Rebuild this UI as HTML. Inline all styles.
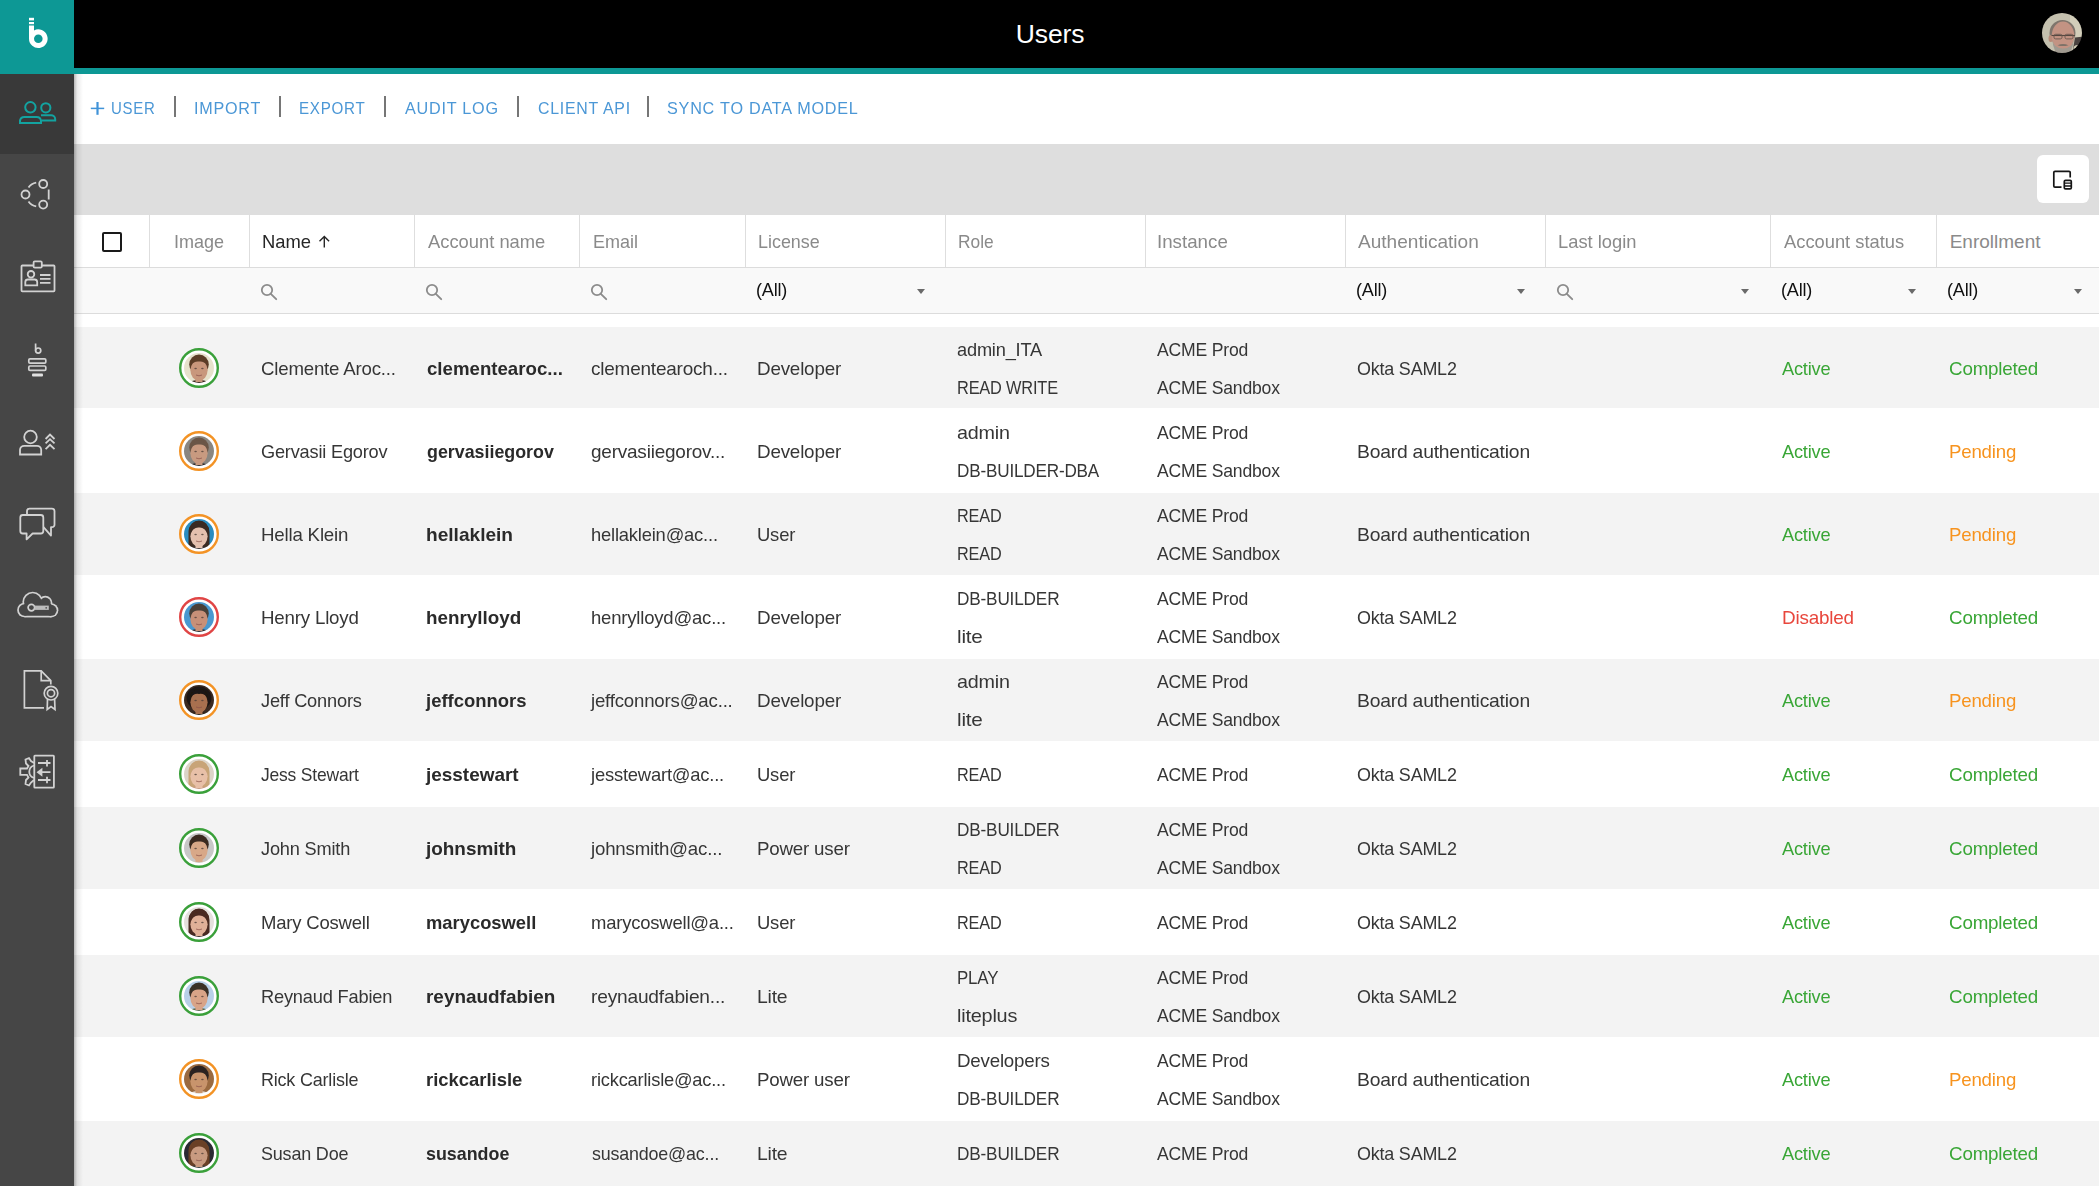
<!DOCTYPE html>
<html><head><meta charset="utf-8"><title>Users</title>
<style>
*{box-sizing:border-box}
html,body{margin:0;padding:0}
body{width:2099px;height:1186px;overflow:hidden;position:relative;background:#fff;font-family:"Liberation Sans",sans-serif;color:#262626}
.abs{position:absolute}
#topbar{position:absolute;left:0;top:0;width:2099px;height:68px;background:#000}
#teal{position:absolute;left:0;top:68px;width:2099px;height:6px;background:#0d9895}
#logo{position:absolute;left:0;top:0;width:74px;height:74px;background:#0d9895}
#side{position:absolute;left:0;top:74px;width:74px;height:1112px;background:#464646}
#sideact{position:absolute;left:0;top:74px;width:74px;height:80px;background:#393939}
#shadow{position:absolute;left:74px;top:74px;width:9px;height:1112px;background:linear-gradient(to right,rgba(0,0,0,.28),rgba(0,0,0,.08) 35%,rgba(0,0,0,0));z-index:5}
#title{position:absolute;left:0;width:2099px;top:17px;text-align:center;color:#fff;font-size:26.5px;line-height:34px;letter-spacing:-0.1px;padding-left:2px}
#band{position:absolute;left:74px;top:144px;width:2025px;height:71px;background:#dedede}
#expbtn{position:absolute;left:2037px;top:155px;width:52px;height:48px;background:#fff;border-radius:6px}
.tb{position:absolute;top:96px;line-height:25px;font-size:17px;color:#4b97d6;letter-spacing:0.8px;white-space:nowrap;transform-origin:0 50%}
.sep{position:absolute;top:96px;width:1.6px;height:21px;background:#767676}
#hdr{position:absolute;left:74px;top:215px;width:2025px;height:53px;background:#fff;border-bottom:1px solid #dcdcdc}
.vs{position:absolute;top:215px;width:1px;height:52px;background:#dedede}
#filt{position:absolute;left:74px;top:268px;width:2025px;height:46px;background:#f9f9f9;border-bottom:1px solid #dcdcdc}
.h{position:absolute;line-height:24px;font-size:19px;color:#8a8a8a;white-space:nowrap;letter-spacing:0;transform-origin:0 50%}
.t{position:absolute;line-height:24px;font-size:19px;color:#363636;white-space:nowrap;letter-spacing:-0.2px;transform-origin:0 50%}
.t.b{font-weight:bold;letter-spacing:0;color:#2a2a2a}
.grn{color:#39a636}
.org{color:#f7931e}
.red{color:#e8463c}
.row{position:absolute;left:74px;width:2025px}
.av{position:absolute}
.all{position:absolute;top:278px;line-height:24px;font-size:18px;color:#111;letter-spacing:-0.2px;transform-origin:0 50%}
.tri{position:absolute;top:289px;width:0;height:0;border-left:4.5px solid transparent;border-right:4.5px solid transparent;border-top:5px solid #6a6a6a}
.srch{position:absolute;top:282px}
</style></head><body>
<div id="topbar"></div>
<div id="teal"></div>
<div id="logo">
<svg width="74" height="74" viewBox="0 0 74 74" style="position:absolute;left:0;top:0">
<rect x="29" y="17.8" width="5" height="2.6" fill="#fff"/>
<rect x="29" y="22" width="5" height="2.2" fill="#fff"/>
<path d="M29 25.4 H34 V30.45 A9.3 9.3 0 1 1 29 38.7 Z" fill="#fff"/>
<circle cx="38.3" cy="38.7" r="4.3" fill="#0d9895"/>
</svg>
</div>
<div id="side"></div>
<div id="sideact"></div>
<svg class="abs" style="left:0;top:74px" width="74" height="780" viewBox="0 74 74 780" fill="none">
<!-- users (active) -->
<g stroke="#13a3a0" stroke-width="2">
<circle cx="30.4" cy="107.3" r="5.2"/>
<path d="M20 123 V120.5 A4.5 4.5 0 0 1 24.5 116.9 H36.5 A4.5 4.5 0 0 1 41 120.5 V123 Z"/>
<circle cx="45.8" cy="107.8" r="4.6"/>
<path d="M41 115.3 H51 A4 4 0 0 1 55.2 119 V120.4 H41.8"/>
</g>
<!-- share -->
<g stroke="#d2d2d2" stroke-width="1.8">
<path d="M28.5 187.5 A12 12 0 0 1 36.2 182.6"/>
<path d="M28.5 201.5 A12 12 0 0 0 36.2 206.4"/>
<path d="M48.7 189.5 V199.5"/>
<circle cx="25.5" cy="194.5" r="4"/>
<circle cx="43.2" cy="184" r="4"/>
<circle cx="43.2" cy="204.6" r="4"/>
</g>
<!-- id card -->
<g stroke="#d2d2d2" stroke-width="1.8">
<rect x="21.5" y="265.5" width="33" height="25.8" rx="0.8"/>
<rect x="33.6" y="261.3" width="8.2" height="6.3" rx="1.2" fill="#464646"/>
<circle cx="31" cy="274.3" r="3.3"/>
<path d="M25.3 285.4 V282 A2.6 2.6 0 0 1 27.9 279.5 H34.6 A2.6 2.6 0 0 1 37.2 282 V285.4 Z"/>
<path d="M40 275 H50.5 M40 278.8 H50.5 M40 282.8 H50.5"/>
</g>
<!-- board -->
<g stroke="#d2d2d2" stroke-width="1.7">
<path d="M35.6 343.5 V350.5"/>
<circle cx="38.2" cy="350.6" r="2.6"/>
<rect x="28.8" y="358.8" width="17" height="4.4" rx="1.2"/>
<rect x="28.8" y="366" width="17" height="4.4" rx="1.2"/>
</g>
<rect x="32" y="373.6" width="11" height="3" rx="1" fill="#e0e0e0"/>
<!-- user promote -->
<g stroke="#d2d2d2" stroke-width="1.8">
<circle cx="30.5" cy="437" r="6.3"/>
<path d="M20 454.5 V449.8 A4.2 4.2 0 0 1 24.2 445.9 H37 A4.2 4.2 0 0 1 41.2 449.8 V454.5 Z"/>
<path d="M45.6 439 L50 434.6 L54.5 439 M45.6 443.4 L50 439.2 L54.5 443.4 M45.6 449.2 L50 444.8 L54.5 449.2"/>
</g>
<!-- chat -->
<g stroke="#d2d2d2" stroke-width="1.8" stroke-linejoin="round">
<path d="M27 514.8 V511 A2.5 2.5 0 0 1 29.5 508.6 H52 A2.5 2.5 0 0 1 54.5 511 V524.5 A2.5 2.5 0 0 1 52 527.2 H51 V535.6 L43.5 527.2"/>
<path d="M22.8 515 H40.8 A2.5 2.5 0 0 1 43.3 517.5 V531 A2.5 2.5 0 0 1 40.8 533.5 H32.6 L26.6 539.4 V533.5 H22.8 A2.5 2.5 0 0 1 20.3 531 V517.5 A2.5 2.5 0 0 1 22.8 515 Z"/>
</g>
<!-- cloud key -->
<g fill="#d2d2d2">
<circle cx="32.7" cy="602" r="10.35"/><circle cx="45.3" cy="603" r="7.15"/><circle cx="51.2" cy="610.3" r="7.15"/><circle cx="24.5" cy="610" r="7.35"/>
<rect x="24.5" y="604" width="26.7" height="13.45"/>
</g>
<g fill="#464646">
<circle cx="32.7" cy="602" r="8.65"/><circle cx="45.3" cy="603" r="5.45"/><circle cx="51.2" cy="610.3" r="5.45"/><circle cx="24.5" cy="610" r="5.65"/>
<rect x="24.5" y="604" width="26.7" height="11.75"/>
</g>
<circle cx="31.4" cy="607.6" r="3.3" stroke="#d2d2d2" stroke-width="1.7"/>
<rect x="34.6" y="605.6" width="14.2" height="4.3" fill="#bcbcbc"/>
<circle cx="46.2" cy="607.8" r="0.9" fill="#555"/>
<!-- doc award -->
<g stroke="#d2d2d2" stroke-width="1.7">
<path d="M44 707.9 H24.4 V670.8 H41.2 L50.8 680.6 V684.5"/>
<path d="M41.2 670.8 V680.6 H50.8"/>
<circle cx="51" cy="693.2" r="6.8"/>
<circle cx="51" cy="693.2" r="3.6"/>
<path d="M47.5 699 L47.2 709.5 L51 706.5 L55 709.5 L54.6 699"/>
</g>
<!-- gear sliders -->
<g stroke="#d2d2d2" stroke-width="1.8">
<rect x="34.3" y="755.6" width="19.6" height="32" rx="0.6"/>
<path d="M34 763 L31 761 L29 758 L25.5 759.5 L26 763.5 L28.5 766 L27 768.5 L20.3 768.5 V774.8 L27 774.8 L28.5 777.5 L26 780 L25.5 784 L29 785.5 L31 782.5 L34 780"/>
<path d="M34 765.5 A6.5 6.5 0 0 0 34 778"/>
<path d="M38 763 H50.5 M47 760 V766.5 M38 780 H50.5 M47 776.8 V783.2 M41.5 772.2 H50.5"/>
<path d="M38 772.2 L41.5 769.5 V775 Z" fill="#d2d2d2"/>
</g>
</svg>
<div id="shadow"></div>
<svg class="abs" style="left:2042px;top:13px" width="40" height="40" viewBox="0 0 40 40">
<clipPath id="hav"><circle cx="20" cy="20" r="20"/></clipPath>
<filter id="havf" x="-10%" y="-10%" width="120%" height="120%"><feGaussianBlur stdDeviation="0.5"/></filter>
<g clip-path="url(#hav)"><g filter="url(#havf)">
<rect x="-2" y="-2" width="44" height="44" fill="#c4c0ae"/>
<rect x="28" y="-2" width="14" height="28" fill="#d2ceba"/>
<path d="M33 24.5 L42 23.5 V42 H30 Z" fill="#4a433f"/>
<ellipse cx="35.5" cy="35.5" rx="4" ry="3.5" fill="#cfcab4"/>
<ellipse cx="19" cy="45" rx="17" ry="7" fill="#2a2624"/>
<ellipse cx="20.5" cy="20" rx="13" ry="13" fill="#7e746c"/>
<ellipse cx="8.8" cy="25.5" rx="2.3" ry="3.6" fill="#b88a78"/>
<ellipse cx="21" cy="23" rx="11.3" ry="14.5" fill="#c39383"/>
<path d="M10.5 27 Q11 41 21 43 Q31 41 31.5 27 Q30 35.5 21 35.5 Q12 35.5 10.5 27 Z" fill="#a09a90"/>
<path d="M15.5 32.2 Q21 30 26.5 32.2 Q21 34 15.5 32.2 Z" fill="#7e7268"/>
<path d="M9.5 22.5 H33" stroke="#54463f" stroke-width="1.1"/>
<rect x="12" y="21.3" width="8" height="4.6" rx="1.6" fill="none" stroke="#65564e" stroke-width="0.9"/>
<rect x="23" y="21.3" width="8" height="4.6" rx="1.6" fill="none" stroke="#65564e" stroke-width="0.9"/>
</g></g>
</svg>
<!-- toolbar -->
<svg class="abs" style="left:90px;top:101px" width="15" height="15" viewBox="0 0 15 15"><path d="M0.8 7.4 H14.2" stroke="#4093d8" stroke-width="1.5"/><path d="M7.5 1 V13.8" stroke="#4093d8" stroke-width="2.2"/></svg>
<div class="sep" style="left:174px"></div>
<div class="sep" style="left:279px"></div>
<div class="sep" style="left:384px"></div>
<div class="sep" style="left:517px"></div>
<div class="sep" style="left:647px"></div>
<div id="band"></div>
<div id="expbtn">
<svg width="52" height="48" viewBox="0 0 52 48" style="position:absolute;left:0;top:0" fill="none">
<path d="M24.5 32.2 H18 A1.2 1.2 0 0 1 16.8 31 V17.5 A1.2 1.2 0 0 1 18 16.3 H32 A1.2 1.2 0 0 1 33.2 17.5 V22.5" stroke="#151515" stroke-width="1.7"/>
<rect x="27.3" y="25.3" width="7" height="8.6" rx="1.2" stroke="#151515" stroke-width="1.7" fill="#fff"/>
<path d="M27.5 28.2 H34 M27.5 31 H34" stroke="#151515" stroke-width="1.3"/>
</svg>
</div>
<div id="hdr"></div>
<div class="vs" style="left:149px"></div>
<div class="vs" style="left:249px"></div>
<div class="vs" style="left:414px"></div>
<div class="vs" style="left:579px"></div>
<div class="vs" style="left:745px"></div>
<div class="vs" style="left:945px"></div>
<div class="vs" style="left:1145px"></div>
<div class="vs" style="left:1345px"></div>
<div class="vs" style="left:1545px"></div>
<div class="vs" style="left:1770px"></div>
<div class="vs" style="left:1936px"></div>
<div class="abs" style="left:102px;top:232px;width:20px;height:20px;border:2px solid #1a1a1a;border-radius:2px;background:#fff"></div>
<svg class="abs" style="left:318px;top:235px" width="13" height="14" viewBox="0 0 13 14" fill="none"><path d="M6.3 1.8 V12.5 M1.5 6.3 L6.3 1.5 L11.1 6.3" stroke="#262626" stroke-width="1.4"/></svg>
<div id="filt"></div>
<svg class="srch" style="left:259px" width="20" height="20" viewBox="0 0 20 20" fill="none"><circle cx="8" cy="8" r="5.2" stroke="#8c8c8c" stroke-width="1.8"/><path d="M11.8 11.8 L17.2 17.2" stroke="#8c8c8c" stroke-width="1.9" stroke-linecap="round"/></svg>
<svg class="srch" style="left:424px" width="20" height="20" viewBox="0 0 20 20" fill="none"><circle cx="8" cy="8" r="5.2" stroke="#8c8c8c" stroke-width="1.8"/><path d="M11.8 11.8 L17.2 17.2" stroke="#8c8c8c" stroke-width="1.9" stroke-linecap="round"/></svg>
<svg class="srch" style="left:589px" width="20" height="20" viewBox="0 0 20 20" fill="none"><circle cx="8" cy="8" r="5.2" stroke="#8c8c8c" stroke-width="1.8"/><path d="M11.8 11.8 L17.2 17.2" stroke="#8c8c8c" stroke-width="1.9" stroke-linecap="round"/></svg>
<svg class="srch" style="left:1555px" width="20" height="20" viewBox="0 0 20 20" fill="none"><circle cx="8" cy="8" r="5.2" stroke="#8c8c8c" stroke-width="1.8"/><path d="M11.8 11.8 L17.2 17.2" stroke="#8c8c8c" stroke-width="1.9" stroke-linecap="round"/></svg>
<div class="tri" style="left:917px"></div>
<div class="tri" style="left:1517px"></div>
<div class="tri" style="left:1741px"></div>
<div class="tri" style="left:1908px"></div>
<div class="tri" style="left:2074px"></div>
<div id="title" style="margin-left:-0.4px">Users</div>
<div class="tb" style="left:110.9px;transform:scaleX(0.8818);">USER</div>
<div class="tb" style="left:193.8px;transform:scaleX(0.9505);">IMPORT</div>
<div class="tb" style="left:299.0px;transform:scaleX(0.8933);">EXPORT</div>
<div class="tb" style="left:405.0px;transform:scaleX(0.9517);">AUDIT LOG</div>
<div class="tb" style="left:537.6px;transform:scaleX(0.9344);">CLIENT API</div>
<div class="tb" style="left:666.8px;transform:scaleX(0.9528);">SYNC TO DATA MODEL</div>
<div class="h" style="left:174.3px;top:230px;transform:scaleX(0.9491);">Image</div>
<div class="h" style="left:262.3px;top:230px;transform:scaleX(0.9677);color:#262626">Name</div>
<div class="h" style="left:428.0px;top:230px;transform:scaleX(0.9659);">Account name</div>
<div class="h" style="left:592.5px;top:230px;transform:scaleX(0.9472);">Email</div>
<div class="h" style="left:757.8px;top:230px;transform:scaleX(0.9423);">License</div>
<div class="h" style="left:957.8px;top:230px;transform:scaleX(0.9117);">Role</div>
<div class="h" style="left:1157.1px;top:230px;transform:scaleX(0.9857);">Instance</div>
<div class="h" style="left:1358.4px;top:230px;transform:scaleX(1.0027);">Authentication</div>
<div class="h" style="left:1557.8px;top:230px;transform:scaleX(0.9649);">Last login</div>
<div class="h" style="left:1784.0px;top:230px;transform:scaleX(0.9645);">Account status</div>
<div class="h" style="left:1949.7px;top:230px;">Enrollment</div>
<div class="all" style="left:756.3px;transform:scaleX(1.0038);">(All)</div>
<div class="all" style="left:1356.3px;transform:scaleX(1.0038);">(All)</div>
<div class="all" style="left:1781.3px;transform:scaleX(1.0038);">(All)</div>
<div class="all" style="left:1947.3px;transform:scaleX(1.0038);">(All)</div>
<div class="row" style="top:327px;height:81px;background:#f3f3f3"></div>
<svg class="av" style="left:179px;top:348px" width="40" height="40" viewBox="0 0 40 40"><circle cx="20" cy="20" r="18.8" fill="#fff" stroke="#3aa03a" stroke-width="2.4"/><clipPath id="c368"><circle cx="20" cy="20" r="15"/></clipPath><filter id="fc368" x="-10%" y="-10%" width="120%" height="120%"><feGaussianBlur stdDeviation="0.45"/></filter><g clip-path="url(#c368)"><g filter="url(#fc368)"><rect x="0" y="0" width="40" height="40" fill="#e6e2cc"/><ellipse cx="20" cy="38" rx="13" ry="6" fill="#3a2a22"/><rect x="16.5" y="28" width="7" height="6" fill="#c8977c"/><ellipse cx="20" cy="16.5" rx="9.8" ry="10" fill="#5a3c28"/><ellipse cx="20" cy="22.3" rx="8.6" ry="10.4" fill="#c8977c"/><path d="M11.5 17 Q13 9.5 20 9.5 Q27 9.5 28.5 17 Q25 13 20 13.5 Q15 13 11.5 17 Z" fill="#5a3c28"/><ellipse cx="16.6" cy="20.5" rx="1.3" ry="0.8" fill="#4a3a34" opacity="0.75"/><ellipse cx="23.4" cy="20.5" rx="1.3" ry="0.8" fill="#4a3a34" opacity="0.75"/><path d="M17 27 Q20 28.6 23 27" stroke="#8a5048" stroke-width="1" fill="none" opacity="0.7"/></g></g></svg>
<div class="t " style="left:261.0px;top:357.2px;transform:scaleX(0.9815);">Clemente Aroc...</div>
<div class="t b" style="left:427.0px;top:357.2px;transform:scaleX(0.9818);">clementearoc...</div>
<div class="t " style="left:591.0px;top:357.2px;transform:scaleX(0.9970);">clementearoch...</div>
<div class="t " style="left:756.8px;top:357.2px;transform:scaleX(0.9904);">Developer</div>
<div class="t " style="left:957.0px;top:338.2px;transform:scaleX(0.9586);">admin_ITA</div>
<div class="t " style="left:957.0px;top:376.2px;transform:scaleX(0.8602);">READ WRITE</div>
<div class="t " style="left:1157.3px;top:338.2px;transform:scaleX(0.9258);">ACME Prod</div>
<div class="t " style="left:1157.3px;top:376.2px;transform:scaleX(0.9248);">ACME Sandbox</div>
<div class="t " style="left:1357.0px;top:357.2px;transform:scaleX(0.9429);">Okta SAML2</div>
<div class="t grn" style="left:1782.3px;top:357.2px;transform:scaleX(0.9582);">Active</div>
<div class="t grn" style="left:1948.7px;top:357.2px;transform:scaleX(0.9894);">Completed</div>
<div class="row" style="top:408px;height:85px;background:#ffffff"></div>
<svg class="av" style="left:179px;top:431px" width="40" height="40" viewBox="0 0 40 40"><circle cx="20" cy="20" r="18.8" fill="#fff" stroke="#f39325" stroke-width="2.4"/><clipPath id="c451"><circle cx="20" cy="20" r="15"/></clipPath><filter id="fc451" x="-10%" y="-10%" width="120%" height="120%"><feGaussianBlur stdDeviation="0.45"/></filter><g clip-path="url(#c451)"><g filter="url(#fc451)"><rect x="0" y="0" width="40" height="40" fill="#8a8680"/><ellipse cx="20" cy="38" rx="13" ry="6" fill="#2a2a2a"/><rect x="16.5" y="28" width="7" height="6" fill="#c89a80"/><ellipse cx="20" cy="16.5" rx="9.8" ry="10" fill="#6b5646"/><ellipse cx="20" cy="22.3" rx="8.6" ry="10.4" fill="#c89a80"/><path d="M11.5 17 Q13 9.5 20 9.5 Q27 9.5 28.5 17 Q25 13 20 13.5 Q15 13 11.5 17 Z" fill="#6b5646"/><ellipse cx="16.6" cy="20.5" rx="1.3" ry="0.8" fill="#4a3a34" opacity="0.75"/><ellipse cx="23.4" cy="20.5" rx="1.3" ry="0.8" fill="#4a3a34" opacity="0.75"/><path d="M17 27 Q20 28.6 23 27" stroke="#8a5048" stroke-width="1" fill="none" opacity="0.7"/></g></g></svg>
<div class="t " style="left:261.0px;top:440.3px;transform:scaleX(0.9565);">Gervasii Egorov</div>
<div class="t b" style="left:427.0px;top:440.3px;transform:scaleX(0.9384);">gervasiiegorov</div>
<div class="t " style="left:591.0px;top:440.3px;transform:scaleX(0.9966);">gervasiiegorov...</div>
<div class="t " style="left:756.8px;top:440.3px;transform:scaleX(0.9904);">Developer</div>
<div class="t " style="left:957.0px;top:421.3px;transform:scaleX(1.0385);">admin</div>
<div class="t " style="left:957.0px;top:459.3px;transform:scaleX(0.9013);">DB-BUILDER-DBA</div>
<div class="t " style="left:1157.3px;top:421.3px;transform:scaleX(0.9258);">ACME Prod</div>
<div class="t " style="left:1157.3px;top:459.3px;transform:scaleX(0.9248);">ACME Sandbox</div>
<div class="t " style="left:1357.0px;top:440.3px;transform:scaleX(1.0154);">Board authentication</div>
<div class="t grn" style="left:1782.3px;top:440.3px;transform:scaleX(0.9582);">Active</div>
<div class="t org" style="left:1948.7px;top:440.3px;transform:scaleX(0.9819);">Pending</div>
<div class="row" style="top:493px;height:82px;background:#f3f3f3"></div>
<svg class="av" style="left:179px;top:514px" width="40" height="40" viewBox="0 0 40 40"><circle cx="20" cy="20" r="18.8" fill="#fff" stroke="#f39325" stroke-width="2.4"/><clipPath id="c534"><circle cx="20" cy="20" r="15"/></clipPath><filter id="fc534" x="-10%" y="-10%" width="120%" height="120%"><feGaussianBlur stdDeviation="0.45"/></filter><g clip-path="url(#c534)"><g filter="url(#fc534)"><rect x="0" y="0" width="40" height="40" fill="#2a8cc0"/><path d="M9.5 36 V18 A10.5 11 0 0 1 30.5 18 V36 Z" fill="#3a2a22"/><ellipse cx="20" cy="38" rx="13" ry="6" fill="#3a3030"/><rect x="16.5" y="28" width="7" height="6" fill="#e4c0ae"/><ellipse cx="20" cy="16.5" rx="9.8" ry="10" fill="#3a2a22"/><ellipse cx="20" cy="22.3" rx="8.6" ry="10.4" fill="#e4c0ae"/><path d="M11.5 20 Q12 10 20 10 Q28 10 28.5 20 Q26 13 20 13.5 Q14 13 11.5 20 Z" fill="#3a2a22"/><ellipse cx="16.6" cy="20.5" rx="1.3" ry="0.8" fill="#4a3a34" opacity="0.75"/><ellipse cx="23.4" cy="20.5" rx="1.3" ry="0.8" fill="#4a3a34" opacity="0.75"/><path d="M17 27 Q20 28.6 23 27" stroke="#8a5048" stroke-width="1" fill="none" opacity="0.7"/></g></g></svg>
<div class="t " style="left:261.0px;top:523.1px;transform:scaleX(0.9839);">Hella Klein</div>
<div class="t b" style="left:426.0px;top:523.1px;transform:scaleX(1.0049);">hellaklein</div>
<div class="t " style="left:591.0px;top:523.1px;transform:scaleX(0.9666);">hellaklein@ac...</div>
<div class="t " style="left:756.8px;top:523.1px;transform:scaleX(0.9697);">User</div>
<div class="t " style="left:957.0px;top:504.1px;transform:scaleX(0.8554);">READ</div>
<div class="t " style="left:957.0px;top:542.1px;transform:scaleX(0.8554);">READ</div>
<div class="t " style="left:1157.3px;top:504.1px;transform:scaleX(0.9258);">ACME Prod</div>
<div class="t " style="left:1157.3px;top:542.1px;transform:scaleX(0.9248);">ACME Sandbox</div>
<div class="t " style="left:1357.0px;top:523.1px;transform:scaleX(1.0154);">Board authentication</div>
<div class="t grn" style="left:1782.3px;top:523.1px;transform:scaleX(0.9582);">Active</div>
<div class="t org" style="left:1948.7px;top:523.1px;transform:scaleX(0.9819);">Pending</div>
<div class="row" style="top:575px;height:84px;background:#ffffff"></div>
<svg class="av" style="left:179px;top:597px" width="40" height="40" viewBox="0 0 40 40"><circle cx="20" cy="20" r="18.8" fill="#fff" stroke="#e04545" stroke-width="2.4"/><clipPath id="c617"><circle cx="20" cy="20" r="15"/></clipPath><filter id="fc617" x="-10%" y="-10%" width="120%" height="120%"><feGaussianBlur stdDeviation="0.45"/></filter><g clip-path="url(#c617)"><g filter="url(#fc617)"><rect x="0" y="0" width="40" height="40" fill="#4898d0"/><ellipse cx="20" cy="38" rx="13" ry="6" fill="#2a2a30"/><rect x="16.5" y="28" width="7" height="6" fill="#c89078"/><ellipse cx="20" cy="16.5" rx="9.8" ry="10" fill="#4a4038"/><ellipse cx="20" cy="22.3" rx="8.6" ry="10.4" fill="#c89078"/><path d="M11.5 17 Q13 9.5 20 9.5 Q27 9.5 28.5 17 Q25 13 20 13.5 Q15 13 11.5 17 Z" fill="#4a4038"/><ellipse cx="16.6" cy="20.5" rx="1.3" ry="0.8" fill="#4a3a34" opacity="0.75"/><ellipse cx="23.4" cy="20.5" rx="1.3" ry="0.8" fill="#4a3a34" opacity="0.75"/><path d="M17 27 Q20 28.6 23 27" stroke="#8a5048" stroke-width="1" fill="none" opacity="0.7"/></g></g></svg>
<div class="t " style="left:261.0px;top:606.1px;transform:scaleX(0.9847);">Henry Lloyd</div>
<div class="t b" style="left:426.0px;top:606.1px;transform:scaleX(0.9916);">henrylloyd</div>
<div class="t " style="left:591.0px;top:606.1px;transform:scaleX(0.9739);">henrylloyd@ac...</div>
<div class="t " style="left:756.8px;top:606.1px;transform:scaleX(0.9904);">Developer</div>
<div class="t " style="left:957.0px;top:587.1px;transform:scaleX(0.9054);">DB-BUILDER</div>
<div class="t " style="left:957.0px;top:625.1px;transform:scaleX(1.0909);">lite</div>
<div class="t " style="left:1157.3px;top:587.1px;transform:scaleX(0.9258);">ACME Prod</div>
<div class="t " style="left:1157.3px;top:625.1px;transform:scaleX(0.9248);">ACME Sandbox</div>
<div class="t " style="left:1357.0px;top:606.1px;transform:scaleX(0.9429);">Okta SAML2</div>
<div class="t red" style="left:1781.9px;top:606.1px;transform:scaleX(0.9929);">Disabled</div>
<div class="t grn" style="left:1948.7px;top:606.1px;transform:scaleX(0.9894);">Completed</div>
<div class="row" style="top:659px;height:82px;background:#f3f3f3"></div>
<svg class="av" style="left:179px;top:680px" width="40" height="40" viewBox="0 0 40 40"><circle cx="20" cy="20" r="18.8" fill="#fff" stroke="#f39325" stroke-width="2.4"/><clipPath id="c700"><circle cx="20" cy="20" r="15"/></clipPath><filter id="fc700" x="-10%" y="-10%" width="120%" height="120%"><feGaussianBlur stdDeviation="0.45"/></filter><g clip-path="url(#c700)"><g filter="url(#fc700)"><rect x="0" y="0" width="40" height="40" fill="#3a2a20"/><ellipse cx="20" cy="18" rx="12.5" ry="11.5" fill="#1e1612"/><ellipse cx="20" cy="38" rx="13" ry="6" fill="#2a2018"/><rect x="16.5" y="28" width="7" height="6" fill="#a87050"/><ellipse cx="20" cy="22.3" rx="8.6" ry="10.4" fill="#a87050"/><path d="M11 18 Q12 9 20 9 Q28 9 29 18 Q25 13 20 14 Q15 13 11 18 Z" fill="#1e1612"/><ellipse cx="16.6" cy="20.5" rx="1.3" ry="0.8" fill="#4a3a34" opacity="0.75"/><ellipse cx="23.4" cy="20.5" rx="1.3" ry="0.8" fill="#4a3a34" opacity="0.75"/><path d="M17 27 Q20 28.6 23 27" stroke="#8a5048" stroke-width="1" fill="none" opacity="0.7"/></g></g></svg>
<div class="t " style="left:261.0px;top:689.0px;transform:scaleX(0.9593);">Jeff Connors</div>
<div class="t b" style="left:426.0px;top:689.0px;transform:scaleX(0.9712);">jeffconnors</div>
<div class="t " style="left:591.0px;top:689.0px;transform:scaleX(0.9806);">jeffconnors@ac...</div>
<div class="t " style="left:756.8px;top:689.0px;transform:scaleX(0.9904);">Developer</div>
<div class="t " style="left:957.0px;top:670.0px;transform:scaleX(1.0385);">admin</div>
<div class="t " style="left:957.0px;top:708.0px;transform:scaleX(1.0909);">lite</div>
<div class="t " style="left:1157.3px;top:670.0px;transform:scaleX(0.9258);">ACME Prod</div>
<div class="t " style="left:1157.3px;top:708.0px;transform:scaleX(0.9248);">ACME Sandbox</div>
<div class="t " style="left:1357.0px;top:689.0px;transform:scaleX(1.0154);">Board authentication</div>
<div class="t grn" style="left:1782.3px;top:689.0px;transform:scaleX(0.9582);">Active</div>
<div class="t org" style="left:1948.7px;top:689.0px;transform:scaleX(0.9819);">Pending</div>
<div class="row" style="top:741px;height:66px;background:#ffffff"></div>
<svg class="av" style="left:179px;top:754px" width="40" height="40" viewBox="0 0 40 40"><circle cx="20" cy="20" r="18.8" fill="#fff" stroke="#3aa03a" stroke-width="2.4"/><clipPath id="c774"><circle cx="20" cy="20" r="15"/></clipPath><filter id="fc774" x="-10%" y="-10%" width="120%" height="120%"><feGaussianBlur stdDeviation="0.45"/></filter><g clip-path="url(#c774)"><g filter="url(#fc774)"><rect x="0" y="0" width="40" height="40" fill="#dcd4c8"/><path d="M9.5 36 V18 A10.5 11 0 0 1 30.5 18 V36 Z" fill="#c8a478"/><ellipse cx="20" cy="38" rx="13" ry="6" fill="#c89a80"/><rect x="16.5" y="28" width="7" height="6" fill="#e8c0a8"/><ellipse cx="20" cy="16.5" rx="9.8" ry="10" fill="#c8a478"/><ellipse cx="20" cy="22.3" rx="8.6" ry="10.4" fill="#e8c0a8"/><path d="M11.5 20 Q12 10 20 10 Q28 10 28.5 20 Q26 13 20 13.5 Q14 13 11.5 20 Z" fill="#c8a478"/><ellipse cx="16.6" cy="20.5" rx="1.3" ry="0.8" fill="#4a3a34" opacity="0.75"/><ellipse cx="23.4" cy="20.5" rx="1.3" ry="0.8" fill="#4a3a34" opacity="0.75"/><path d="M17 27 Q20 28.6 23 27" stroke="#8a5048" stroke-width="1" fill="none" opacity="0.7"/></g></g></svg>
<div class="t " style="left:261.0px;top:763.0px;transform:scaleX(0.9189);">Jess Stewart</div>
<div class="t b" style="left:426.0px;top:763.0px;transform:scaleX(0.9970);">jesstewart</div>
<div class="t " style="left:591.0px;top:763.0px;transform:scaleX(0.9674);">jesstewart@ac...</div>
<div class="t " style="left:756.8px;top:763.0px;transform:scaleX(0.9697);">User</div>
<div class="t " style="left:957.0px;top:763.0px;transform:scaleX(0.8554);">READ</div>
<div class="t " style="left:1157.3px;top:763.0px;transform:scaleX(0.9258);">ACME Prod</div>
<div class="t " style="left:1357.0px;top:763.0px;transform:scaleX(0.9429);">Okta SAML2</div>
<div class="t grn" style="left:1782.3px;top:763.0px;transform:scaleX(0.9582);">Active</div>
<div class="t grn" style="left:1948.7px;top:763.0px;transform:scaleX(0.9894);">Completed</div>
<div class="row" style="top:807px;height:82px;background:#f3f3f3"></div>
<svg class="av" style="left:179px;top:828px" width="40" height="40" viewBox="0 0 40 40"><circle cx="20" cy="20" r="18.8" fill="#fff" stroke="#3aa03a" stroke-width="2.4"/><clipPath id="c848"><circle cx="20" cy="20" r="15"/></clipPath><filter id="fc848" x="-10%" y="-10%" width="120%" height="120%"><feGaussianBlur stdDeviation="0.45"/></filter><g clip-path="url(#c848)"><g filter="url(#fc848)"><rect x="0" y="0" width="40" height="40" fill="#c8c8c8"/><ellipse cx="20" cy="38" rx="13" ry="6" fill="#d0c8c0"/><rect x="16.5" y="28" width="7" height="6" fill="#d8a888"/><ellipse cx="20" cy="16.5" rx="9.8" ry="10" fill="#3a2a20"/><ellipse cx="20" cy="22.3" rx="8.6" ry="10.4" fill="#d8a888"/><path d="M11.5 17 Q13 9.5 20 9.5 Q27 9.5 28.5 17 Q25 13 20 13.5 Q15 13 11.5 17 Z" fill="#3a2a20"/><ellipse cx="16.6" cy="20.5" rx="1.3" ry="0.8" fill="#4a3a34" opacity="0.75"/><ellipse cx="23.4" cy="20.5" rx="1.3" ry="0.8" fill="#4a3a34" opacity="0.75"/><path d="M17 27 Q20 28.6 23 27" stroke="#8a5048" stroke-width="1" fill="none" opacity="0.7"/></g></g></svg>
<div class="t " style="left:261.0px;top:837.1px;transform:scaleX(0.9571);">John Smith</div>
<div class="t b" style="left:426.0px;top:837.1px;transform:scaleX(0.9957);">johnsmith</div>
<div class="t " style="left:591.0px;top:837.1px;transform:scaleX(0.9821);">johnsmith@ac...</div>
<div class="t " style="left:756.8px;top:837.1px;transform:scaleX(0.9851);">Power user</div>
<div class="t " style="left:957.0px;top:818.1px;transform:scaleX(0.9054);">DB-BUILDER</div>
<div class="t " style="left:957.0px;top:856.1px;transform:scaleX(0.8554);">READ</div>
<div class="t " style="left:1157.3px;top:818.1px;transform:scaleX(0.9258);">ACME Prod</div>
<div class="t " style="left:1157.3px;top:856.1px;transform:scaleX(0.9248);">ACME Sandbox</div>
<div class="t " style="left:1357.0px;top:837.1px;transform:scaleX(0.9429);">Okta SAML2</div>
<div class="t grn" style="left:1782.3px;top:837.1px;transform:scaleX(0.9582);">Active</div>
<div class="t grn" style="left:1948.7px;top:837.1px;transform:scaleX(0.9894);">Completed</div>
<div class="row" style="top:889px;height:66px;background:#ffffff"></div>
<svg class="av" style="left:179px;top:902px" width="40" height="40" viewBox="0 0 40 40"><circle cx="20" cy="20" r="18.8" fill="#fff" stroke="#3aa03a" stroke-width="2.4"/><clipPath id="c922"><circle cx="20" cy="20" r="15"/></clipPath><filter id="fc922" x="-10%" y="-10%" width="120%" height="120%"><feGaussianBlur stdDeviation="0.45"/></filter><g clip-path="url(#c922)"><g filter="url(#fc922)"><rect x="0" y="0" width="40" height="40" fill="#e4e0dc"/><path d="M9.5 36 V18 A10.5 11 0 0 1 30.5 18 V36 Z" fill="#4a2a20"/><ellipse cx="20" cy="38" rx="13" ry="6" fill="#3a2a2a"/><rect x="16.5" y="28" width="7" height="6" fill="#e0b098"/><ellipse cx="20" cy="16.5" rx="9.8" ry="10" fill="#4a2a20"/><ellipse cx="20" cy="22.3" rx="8.6" ry="10.4" fill="#e0b098"/><path d="M11.5 20 Q12 10 20 10 Q28 10 28.5 20 Q26 13 20 13.5 Q14 13 11.5 20 Z" fill="#4a2a20"/><ellipse cx="16.6" cy="20.5" rx="1.3" ry="0.8" fill="#4a3a34" opacity="0.75"/><ellipse cx="23.4" cy="20.5" rx="1.3" ry="0.8" fill="#4a3a34" opacity="0.75"/><path d="M17 27 Q20 28.6 23 27" stroke="#8a5048" stroke-width="1" fill="none" opacity="0.7"/></g></g></svg>
<div class="t " style="left:261.0px;top:911.0px;transform:scaleX(0.9737);">Mary Coswell</div>
<div class="t b" style="left:426.0px;top:911.0px;transform:scaleX(0.9669);">marycoswell</div>
<div class="t " style="left:591.0px;top:911.0px;transform:scaleX(0.9706);">marycoswell@a...</div>
<div class="t " style="left:756.8px;top:911.0px;transform:scaleX(0.9697);">User</div>
<div class="t " style="left:957.0px;top:911.0px;transform:scaleX(0.8554);">READ</div>
<div class="t " style="left:1157.3px;top:911.0px;transform:scaleX(0.9258);">ACME Prod</div>
<div class="t " style="left:1357.0px;top:911.0px;transform:scaleX(0.9429);">Okta SAML2</div>
<div class="t grn" style="left:1782.3px;top:911.0px;transform:scaleX(0.9582);">Active</div>
<div class="t grn" style="left:1948.7px;top:911.0px;transform:scaleX(0.9894);">Completed</div>
<div class="row" style="top:955px;height:82px;background:#f3f3f3"></div>
<svg class="av" style="left:179px;top:976px" width="40" height="40" viewBox="0 0 40 40"><circle cx="20" cy="20" r="18.8" fill="#fff" stroke="#3aa03a" stroke-width="2.4"/><clipPath id="c996"><circle cx="20" cy="20" r="15"/></clipPath><filter id="fc996" x="-10%" y="-10%" width="120%" height="120%"><feGaussianBlur stdDeviation="0.45"/></filter><g clip-path="url(#c996)"><g filter="url(#fc996)"><rect x="0" y="0" width="40" height="40" fill="#b8d0e8"/><ellipse cx="20" cy="38" rx="13" ry="6" fill="#5a6a50"/><rect x="16.5" y="28" width="7" height="6" fill="#d8a488"/><ellipse cx="20" cy="16.5" rx="9.8" ry="10" fill="#3a3028"/><ellipse cx="20" cy="22.3" rx="8.6" ry="10.4" fill="#d8a488"/><path d="M11.5 17 Q13 9.5 20 9.5 Q27 9.5 28.5 17 Q25 13 20 13.5 Q15 13 11.5 17 Z" fill="#3a3028"/><ellipse cx="16.6" cy="20.5" rx="1.3" ry="0.8" fill="#4a3a34" opacity="0.75"/><ellipse cx="23.4" cy="20.5" rx="1.3" ry="0.8" fill="#4a3a34" opacity="0.75"/><path d="M17 27 Q20 28.6 23 27" stroke="#8a5048" stroke-width="1" fill="none" opacity="0.7"/></g></g></svg>
<div class="t " style="left:261.0px;top:985.1px;transform:scaleX(0.9603);">Reynaud Fabien</div>
<div class="t b" style="left:426.0px;top:985.1px;transform:scaleX(0.9955);">reynaudfabien</div>
<div class="t " style="left:591.0px;top:985.1px;transform:scaleX(1.0082);">reynaudfabien...</div>
<div class="t " style="left:756.8px;top:985.1px;transform:scaleX(1.0191);">Lite</div>
<div class="t " style="left:957.0px;top:966.1px;transform:scaleX(0.8889);">PLAY</div>
<div class="t " style="left:957.0px;top:1004.1px;transform:scaleX(1.0449);">liteplus</div>
<div class="t " style="left:1157.3px;top:966.1px;transform:scaleX(0.9258);">ACME Prod</div>
<div class="t " style="left:1157.3px;top:1004.1px;transform:scaleX(0.9248);">ACME Sandbox</div>
<div class="t " style="left:1357.0px;top:985.1px;transform:scaleX(0.9429);">Okta SAML2</div>
<div class="t grn" style="left:1782.3px;top:985.1px;transform:scaleX(0.9582);">Active</div>
<div class="t grn" style="left:1948.7px;top:985.1px;transform:scaleX(0.9894);">Completed</div>
<div class="row" style="top:1037px;height:84px;background:#ffffff"></div>
<svg class="av" style="left:179px;top:1059px" width="40" height="40" viewBox="0 0 40 40"><circle cx="20" cy="20" r="18.8" fill="#fff" stroke="#f39325" stroke-width="2.4"/><clipPath id="c1079"><circle cx="20" cy="20" r="15"/></clipPath><filter id="fc1079" x="-10%" y="-10%" width="120%" height="120%"><feGaussianBlur stdDeviation="0.45"/></filter><g clip-path="url(#c1079)"><g filter="url(#fc1079)"><rect x="0" y="0" width="40" height="40" fill="#9a6a40"/><ellipse cx="20" cy="38" rx="13" ry="6" fill="#e8e0d8"/><rect x="16.5" y="28" width="7" height="6" fill="#c8946c"/><ellipse cx="20" cy="16.5" rx="9.8" ry="10" fill="#2a2420"/><ellipse cx="20" cy="22.3" rx="8.6" ry="10.4" fill="#c8946c"/><path d="M11.5 17 Q13 9.5 20 9.5 Q27 9.5 28.5 17 Q25 13 20 13.5 Q15 13 11.5 17 Z" fill="#2a2420"/><ellipse cx="16.6" cy="20.5" rx="1.3" ry="0.8" fill="#4a3a34" opacity="0.75"/><ellipse cx="23.4" cy="20.5" rx="1.3" ry="0.8" fill="#4a3a34" opacity="0.75"/><path d="M17 27 Q20 28.6 23 27" stroke="#8a5048" stroke-width="1" fill="none" opacity="0.7"/></g></g></svg>
<div class="t " style="left:261.0px;top:1068.2px;transform:scaleX(0.9453);">Rick Carlisle</div>
<div class="t b" style="left:426.0px;top:1068.2px;transform:scaleX(0.9694);">rickcarlisle</div>
<div class="t " style="left:591.0px;top:1068.2px;transform:scaleX(0.9617);">rickcarlisle@ac...</div>
<div class="t " style="left:756.8px;top:1068.2px;transform:scaleX(0.9851);">Power user</div>
<div class="t " style="left:957.0px;top:1049.2px;transform:scaleX(0.9851);">Developers</div>
<div class="t " style="left:957.0px;top:1087.2px;transform:scaleX(0.9054);">DB-BUILDER</div>
<div class="t " style="left:1157.3px;top:1049.2px;transform:scaleX(0.9258);">ACME Prod</div>
<div class="t " style="left:1157.3px;top:1087.2px;transform:scaleX(0.9248);">ACME Sandbox</div>
<div class="t " style="left:1357.0px;top:1068.2px;transform:scaleX(1.0154);">Board authentication</div>
<div class="t grn" style="left:1782.3px;top:1068.2px;transform:scaleX(0.9582);">Active</div>
<div class="t org" style="left:1948.7px;top:1068.2px;transform:scaleX(0.9819);">Pending</div>
<div class="row" style="top:1121px;height:66px;background:#f3f3f3"></div>
<svg class="av" style="left:179px;top:1133px" width="40" height="40" viewBox="0 0 40 40"><circle cx="20" cy="20" r="18.8" fill="#fff" stroke="#3aa03a" stroke-width="2.4"/><clipPath id="c1153"><circle cx="20" cy="20" r="15"/></clipPath><filter id="fc1153" x="-10%" y="-10%" width="120%" height="120%"><feGaussianBlur stdDeviation="0.45"/></filter><g clip-path="url(#c1153)"><g filter="url(#fc1153)"><rect x="0" y="0" width="40" height="40" fill="#2a2a30"/><path d="M9.5 36 V18 A10.5 11 0 0 1 30.5 18 V36 Z" fill="#6a4028"/><ellipse cx="20" cy="38" rx="13" ry="6" fill="#3a3a3a"/><rect x="16.5" y="28" width="7" height="6" fill="#c89a80"/><ellipse cx="20" cy="16.5" rx="9.8" ry="10" fill="#6a4028"/><ellipse cx="20" cy="22.3" rx="8.6" ry="10.4" fill="#c89a80"/><path d="M11.5 20 Q12 10 20 10 Q28 10 28.5 20 Q26 13 20 13.5 Q14 13 11.5 20 Z" fill="#6a4028"/><ellipse cx="16.6" cy="20.5" rx="1.3" ry="0.8" fill="#4a3a34" opacity="0.75"/><ellipse cx="23.4" cy="20.5" rx="1.3" ry="0.8" fill="#4a3a34" opacity="0.75"/><path d="M17 27 Q20 28.6 23 27" stroke="#8a5048" stroke-width="1" fill="none" opacity="0.7"/></g></g></svg>
<div class="t " style="left:261.0px;top:1141.9px;transform:scaleX(0.9462);">Susan Doe</div>
<div class="t b" style="left:426.0px;top:1141.9px;transform:scaleX(0.9394);">susandoe</div>
<div class="t " style="left:592.0px;top:1141.9px;transform:scaleX(0.9418);">susandoe@ac...</div>
<div class="t " style="left:756.8px;top:1141.9px;transform:scaleX(1.0191);">Lite</div>
<div class="t " style="left:957.0px;top:1141.9px;transform:scaleX(0.9054);">DB-BUILDER</div>
<div class="t " style="left:1157.3px;top:1141.9px;transform:scaleX(0.9258);">ACME Prod</div>
<div class="t " style="left:1357.0px;top:1141.9px;transform:scaleX(0.9429);">Okta SAML2</div>
<div class="t grn" style="left:1782.3px;top:1141.9px;transform:scaleX(0.9582);">Active</div>
<div class="t grn" style="left:1948.7px;top:1141.9px;transform:scaleX(0.9894);">Completed</div>
</body></html>
